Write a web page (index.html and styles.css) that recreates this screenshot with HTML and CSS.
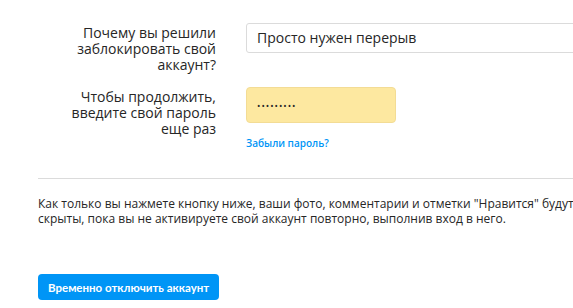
FILE: index.html
```html
<!DOCTYPE html>
<html lang="ru">

<head>
  <meta charset="UTF-8">
  <meta name="viewport" content="width=device-width, initial-scale=1.0">
  <title>Временно отключить аккаунт</title>
  <link rel="stylesheet" href="styles.css">
</head>

<body>
  <div class="page">
    <form class="form">
      <div class="row">
        <label class="label" for="reason">Почему вы решили заблокировать свой аккаунт?</label>
        <div class="field">
          <div class="select" id="reason">Просто нужен перерыв</div>
        </div>
      </div>

      <div class="row">
        <label class="label" for="pass">Чтобы продолжить, введите свой пароль еще раз</label>
        <div class="field">
          <div class="password" id="pass"><span class="dots">•••••••••</span></div>
          <a class="forgot" href="#">Забыли пароль?</a>
        </div>
      </div>
    </form>

    <hr class="divider">

    <p class="note">Как только вы нажмете кнопку ниже, ваши фото, комментарии и отметки "Нравится" будут скрыты, пока вы не активируете свой аккаунт повторно, выполнив вход в него.</p>

    <button class="btn" type="button">Временно отключить аккаунт</button>
  </div>
</body>

</html>
```

FILE: styles.css
```css
* {
  margin: 0;
  padding: 0;
  box-sizing: border-box;
}
body {
  font-family: "Open Sans", "Noto Sans", sans-serif;
  color: #262626;
  background: #fff;
}
.page {
  padding: 23px 0 0 38px;
  height: 308px;
  overflow: hidden;
}
.form {
  display: flex;
  flex-direction: column;
  gap: 14px;
}
.row {
  display: grid;
  grid-template-columns: 178px 360px;
  column-gap: 30px;
}
.label {
  text-align: right;
  font-size: 14px;
  line-height: 16px;
  padding: 2px 0 0 24px;
}
.select {
  height: 30px;
  border: 1px solid #dbdbdb;
  border-radius: 3px;
  font-size: 14px;
  line-height: 28px;
  padding-left: 10px;
  background: #fff;
}
.password {
  width: 150px;
  height: 36px;
  border: 1px solid #f3dc95;
  border-radius: 4px;
  background: #fde8a0;
  padding-left: 10px;
  display: flex;
  align-items: center;
}
.dots {
  font-size: 9px;
  letter-spacing: 1px;
  color: #262626;
}
.forgot {
  display: block;
  margin-top: 13px;
  font-size: 10px;
  font-weight: 600;
  line-height: 14px;
  color: #0095f6;
  text-decoration: none;
}
.divider {
  border: 0;
  border-top: 1px solid #dbdbdb;
  margin: 28px 0 0;
  width: 560px;
}
.note {
  margin-top: 17px;
  font-size: 12px;
  line-height: 15px;
  width: 540px;
}
.btn {
  display: block;
  margin-top: 48px;
  height: 26px;
  padding: 0 10px;
  border: 0;
  border-radius: 4px;
  background: #0095f6;
  color: #fff;
  font-family: Lato, "Open Sans", sans-serif;
  font-size: 11.5px;
  font-weight: 700;
}
```
